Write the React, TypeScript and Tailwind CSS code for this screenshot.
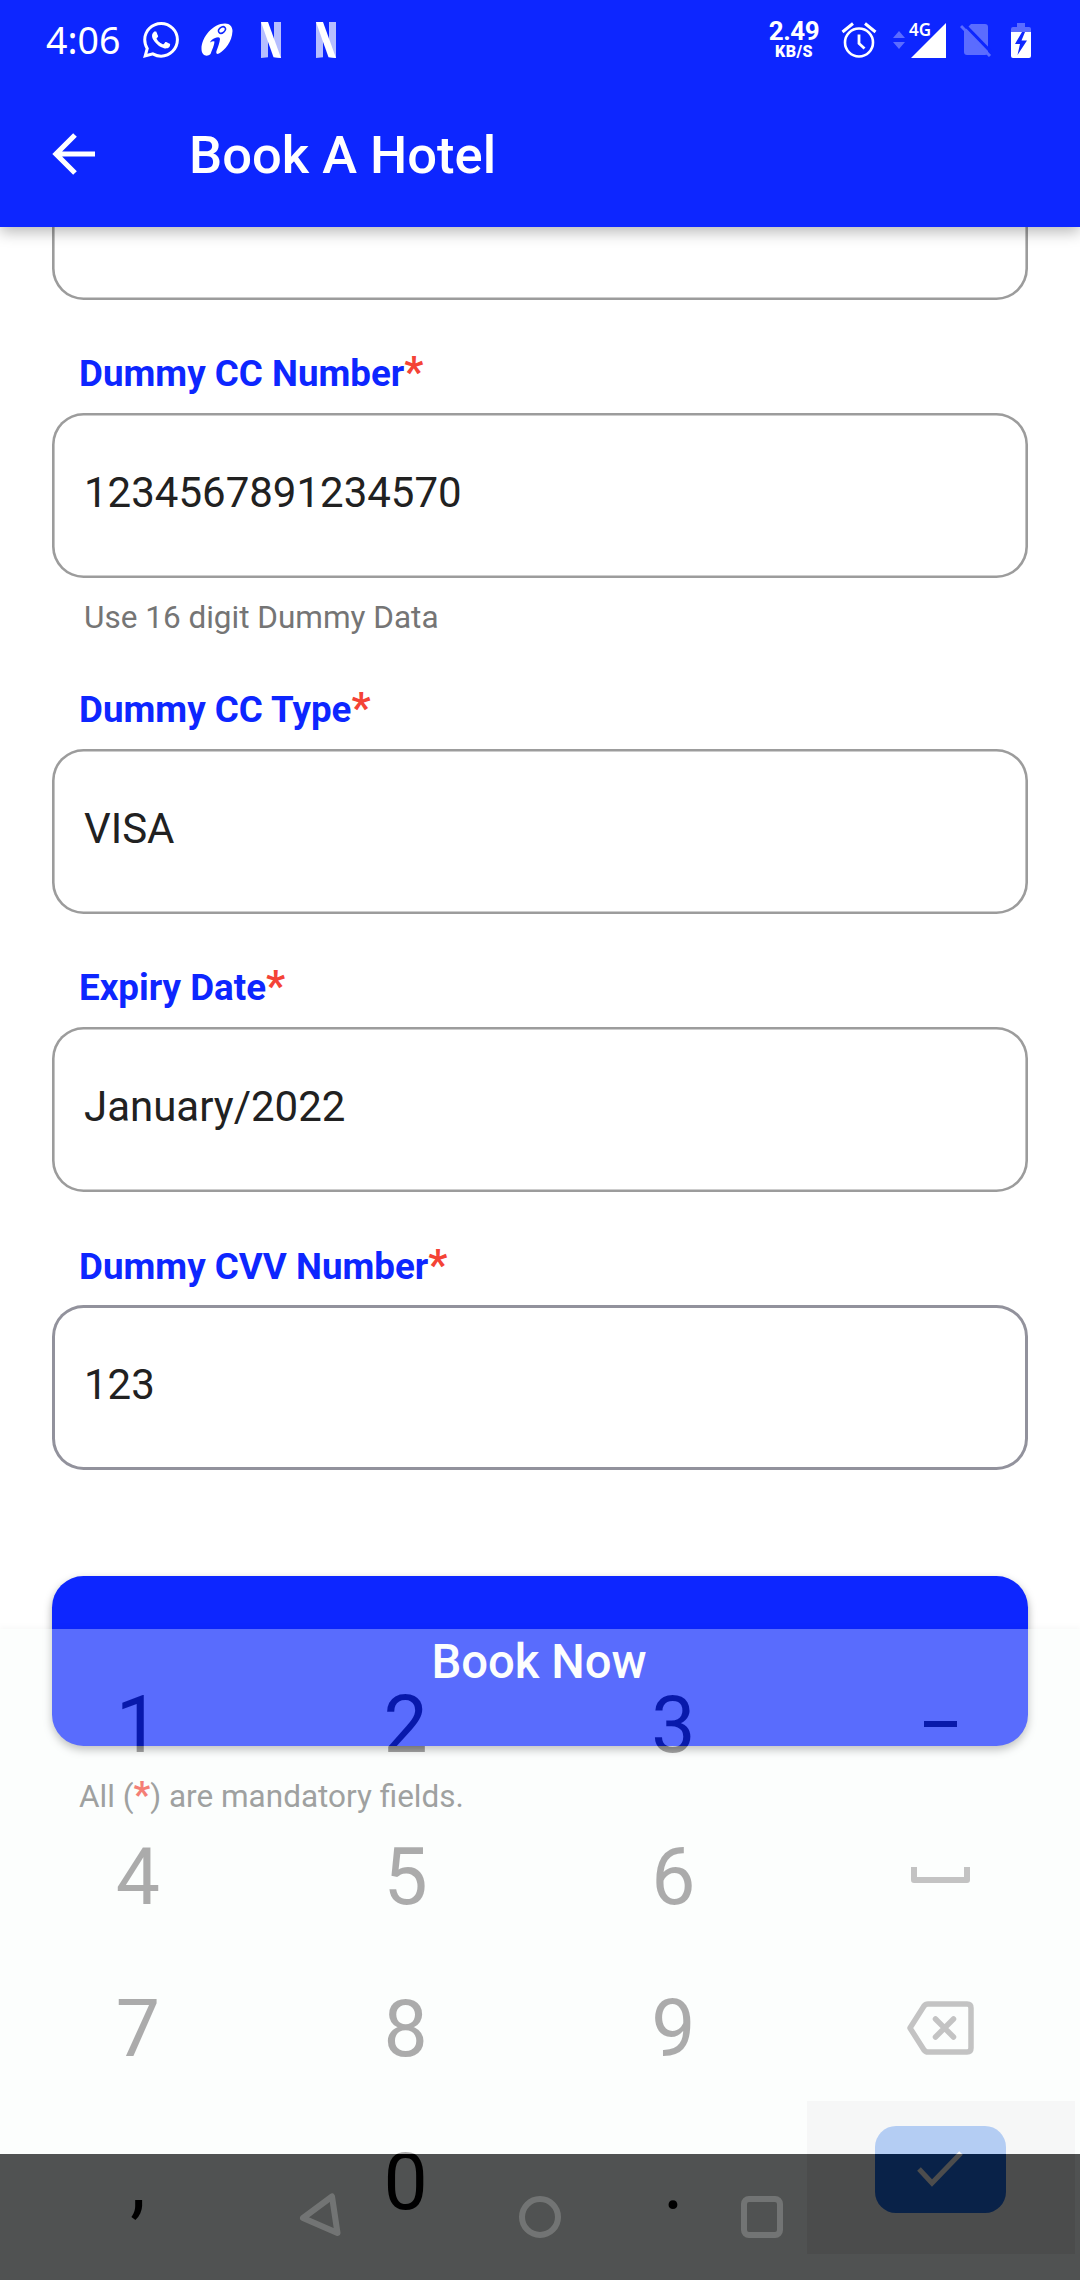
import type { ReactNode } from "react";

function Label({ children }: { children: ReactNode }) {
  return (
    <div className="h-[44px] whitespace-nowrap pl-[27px] pt-[0.5px] text-[36.75px] font-bold leading-[44px] text-[#0d26ff]">
      {children}
      <span className="text-[42px] font-bold leading-[0] text-[#f44336]">*</span>
    </div>
  );
}

function Field({ label, value, focused, helper }: { label: string; value: string; focused?: boolean; helper?: string }) {
  return (
    <section className={helper ? "h-[336px]" : "h-[278.25px]"}>
      <Label>{label}</Label>
      <div
        className={
          "mt-[17px] flex h-[165.4px] items-center rounded-[31.5px] pb-[5px] pl-[32px] text-[42px] leading-[50px] text-[#212121] " +
          (focused ? "shadow-[inset_0_0_0_3px_#92929c]" : "shadow-[inset_0_0_0_2.6px_#9c9c9c]")
        }
      >
        {value}
      </div>
      {helper && (
        <p className="mt-[21px] pl-[32px] text-[31.5px] leading-[38px] text-[#757575]">{helper}</p>
      )}
    </section>
  );
}

function StatusBar() {
  return (
    <div className="flex h-[80px] items-center text-white">
      <span className="ml-[46px] w-[97px] font-['Noto_Sans'] text-[37.5px] font-normal leading-[50px]">4:06</span>
      <svg className="h-[36px] w-[36px]" viewBox="0 0 24 24" fill="currentColor">
        <path d="M17.472 14.382c-.297-.149-1.758-.867-2.03-.967-.273-.099-.471-.148-.67.15-.197.297-.767.966-.94 1.164-.173.199-.347.223-.644.075-.297-.15-1.255-.463-2.39-1.475-.883-.788-1.48-1.761-1.653-2.059-.173-.297-.018-.458.13-.606.134-.133.298-.347.446-.52.149-.174.198-.298.298-.497.099-.198.05-.371-.025-.52-.075-.149-.669-1.612-.916-2.207-.242-.579-.487-.5-.669-.51-.173-.008-.371-.01-.57-.01-.198 0-.52.074-.792.372-.272.297-1.04 1.016-1.04 2.479 0 1.462 1.065 2.875 1.213 3.074.149.198 2.096 3.2 5.077 4.487.709.306 1.262.489 1.694.625.712.227 1.36.195 1.871.118.571-.085 1.758-.719 2.006-1.413.248-.694.248-1.289.173-1.413-.074-.124-.272-.198-.57-.347m-5.421 7.403h-.004a9.87 9.87 0 01-5.031-1.378l-.361-.214-3.741.982.998-3.648-.235-.374a9.86 9.86 0 01-1.51-5.26c.001-5.45 4.436-9.884 9.888-9.884 2.64 0 5.122 1.03 6.988 2.898a9.825 9.825 0 012.893 6.994c-.003 5.45-4.437 9.884-9.885 9.884m8.413-18.297A11.815 11.815 0 0012.05 0C5.495 0 .16 5.335.157 11.892c0 2.096.547 4.142 1.588 5.945L.057 24l6.305-1.654a11.882 11.882 0 005.683 1.448h.005c6.554 0 11.89-5.335 11.893-11.893a11.821 11.821 0 00-3.48-8.413z" />
      </svg>
      <svg className="ml-[22px] h-[34px] w-[32px]" viewBox="0 0 32 34">
        <path fill="#fff" d="M31.500 8C31 19 24 27 18 30.500Q14.500 32 15.500 28C17 24 18.500 20 19 16Q19 13.500 15.500 14.500C11.500 15.500 9.500 18 9 19.500Q12 17.500 13.500 18.500C13.500 22 11 27 9.500 31C6 34.500 .5 32.500 .5 26C.5 14 12 .5 24 .5C29 .5 31.500 4 31.500 8Z" />
        <ellipse cx="21" cy="7" rx="3.800" ry="2.700" transform="rotate(-40 21 7)" fill="#fff" stroke="#0d26ff" strokeWidth="1.500" />
      </svg>
      <NetflixMark className="ml-[28px]" />
      <NetflixMark className="ml-[35px]" />
      <div className="ml-[432px] flex w-[52px] flex-col items-center pb-px font-bold">
        <span className="text-[26px] leading-[22px] tracking-[-0.5px]">2.49</span>
        <span className="mt-[2px] text-[16px] font-black leading-[16px] tracking-[0.5px]">KB/S</span>
      </div>
      <svg className="ml-[21px] h-[36px] w-[36px]" viewBox="0 0 36 36" fill="none" stroke="#fff" strokeWidth="2.600">
        <circle cx="18" cy="20.500" r="14" />
        <path d="M1.500 10L12 1.500M34.500 10L24 1.500" strokeWidth="3" />
        <path d="M18 12.500V21.500L23.500 26.500" strokeWidth="2.800" />
      </svg>
      <svg className="ml-[16px] h-[18px] w-[12px]" viewBox="0 0 12 18" fill="#5b6cff">
        <path d="M6 0L12 7H0ZM0 11H12L6 18Z" />
      </svg>
      <div className="relative ml-[6px] h-[35px] w-[35px]">
        <svg className="h-[35px] w-[35px]" viewBox="0 0 35 35">
          <path d="M35 0V35H0Z" fill="#fff" />
          <path d="M0 0H21V12.500L17 17H0Z" fill="#0d26ff" />
        </svg>
        <span className="absolute -left-[2px] -top-[2px] font-['Noto_Sans'] text-[17px] font-semibold leading-[17px]">4G</span>
      </div>
      <svg className="ml-[14px] h-[34px] w-[32px]" viewBox="0 0 32 34">
        <path d="M11 1H25Q28 1 28 4V29Q28 32 25 32H7Q4 32 4 29V8Z" fill="#5b6cff" />
        <path d="M3 0L32 30" stroke="#0d26ff" strokeWidth="3" />
        <path d="M1 3L30 33" stroke="#5b6cff" strokeWidth="3" />
      </svg>
      <svg className="ml-[19px] h-[35px] w-[20px]" viewBox="0 0 20 35">
        <path d="M6 0H14V4H18Q20 4 20 6V9H0V6Q0 4 2 4H6Z" fill="#5b6cff" />
        <path d="M0 9H20V33Q20 35 18 35H2Q0 35 0 33Z" fill="#fff" />
        <path d="M11 9L4 21H9L6.500 32L16 17.500H10.500L14 9Z" fill="#0d26ff" />
      </svg>
    </div>
  );
}

function NetflixMark({ className }: { className: string }) {
  return (
    <svg className={className + " h-[36px] w-[20px]"} viewBox="0 0 20 36">
      <path d="M0 0H7V35.300L0 36ZM13 0H20V36L13 35Z" fill="#b6beff" />
      <path d="M0 0H7L20 36L12.500 35.300Z" fill="#fff" />
    </svg>
  );
}

function Key({ children }: { children: ReactNode }) {
  return <div className="flex items-center justify-center pr-[2px]">{children}</div>;
}

function CharKey({ children }: { children: ReactNode }) {
  return <div className="flex items-center justify-center pt-[4px] text-[78.75px] leading-[92px]">{children}</div>;
}

function Keyboard() {
  return (
    <div className="absolute inset-x-0 bottom-0 h-[651px] bg-[#f6fcfa] pl-[4px] pr-[5px] pt-[18px] text-black opacity-[0.327] shadow-[0_-2px_5px_rgba(0,0,0,0.08)]">
      <div className="grid auto-rows-[152.2px] grid-cols-4">
        <CharKey>1</CharKey>
        <CharKey>2</CharKey>
        <CharKey>3</CharKey>
        <Key>
          <div className="mt-[2px] h-[6px] w-[33px] bg-black" />
        </Key>
        <CharKey>4</CharKey>
        <CharKey>5</CharKey>
        <CharKey>6</CharKey>
        <Key>
          <svg className="h-[16px] w-[59px]" viewBox="0 0 59 16" fill="none" stroke="#4a4a4a" strokeWidth="6">
            <path d="M3 0V13H56V0" strokeLinejoin="round" />
          </svg>
        </Key>
        <CharKey>7</CharKey>
        <CharKey>8</CharKey>
        <CharKey>9</CharKey>
        <Key>
          <svg className="mt-px h-[54px] w-[67px]" viewBox="0 0 67 54" fill="none" stroke="#4a4a4a" strokeWidth="5.500" strokeLinejoin="round" strokeLinecap="round">
            <path d="M21 3H60Q64 3 64 7V47Q64 51 60 51H21Q18.500 51 17 49L3 27L17 5Q18.500 3 21 3Z" />
            <path d="M28.500 18L46.500 36M46.500 18L28.500 36" />
          </svg>
        </Key>
        <CharKey>,</CharKey>
        <CharKey>0</CharKey>
        <CharKey>.</CharKey>
        <div className="-mt-[3px] flex h-[153px] items-center justify-center bg-[#e6e9e9] pb-[16px] pr-[2px]">
          <div className="flex h-[87px] w-[131px] items-center justify-center rounded-[21px] bg-[#1d69dd]">
            <svg className="h-[36px] w-[46px]" viewBox="0 0 46 36" fill="none" stroke="#ebebeb" strokeWidth="5">
              <path d="M2 18L15 32L44 2" />
            </svg>
          </div>
        </div>
      </div>
    </div>
  );
}

export default function App() {
  return (
    <div className="relative flex h-[2280px] w-[1080px] flex-col overflow-hidden bg-white font-[Roboto,sans-serif]">
      <header className="z-10 h-[227px] shrink-0 bg-[#0d26ff] shadow-[0_5px_14px_rgba(0,0,0,0.28)]">
        <StatusBar />
        <div className="flex h-[147px] items-center">
          <svg className="ml-[52px] h-[42px] w-[43px]" viewBox="0 0 43 42" fill="none" stroke="#fff" strokeWidth="5.200">
            <path d="M43 21H4M23 2L4 21L23 40" />
          </svg>
          <h1 className="ml-[94px] pt-[2px] text-[52.5px] font-medium leading-[62px] text-white">Book A Hotel</h1>
        </div>
      </header>

      <main className="flex min-h-0 flex-1 flex-col px-[52px]">
        <div className="h-[73px] shrink-0 overflow-hidden">
          <div className="-mt-[92.400px] h-[165.400px] rounded-[31.5px] shadow-[inset_0_0_0_2.6px_#9c9c9c]" />
        </div>
        <div className="mt-[51.600px] shrink-0">
          <Field label="Dummy CC Number" value="1234567891234570" helper="Use 16 digit Dummy Data" />
          <Field label="Dummy CC Type" value="VISA" />
          <Field label="Expiry Date" value="January/2022" />
          <Field label="Dummy CVV Number" value="123" focused />
        </div>
        <button className="mt-[53.500px] h-[170.600px] shrink-0 rounded-[31.5px] bg-[#0d26ff] pr-[2px] pt-px text-[47.25px] font-medium leading-[56px] text-white shadow-[0_4px_8px_rgba(0,0,0,0.35)]">
          Book Now
        </button>
        <p className="mt-[32px] pl-[27px] text-[31.5px] leading-[38px] text-[#757575]">
          All (<span className="text-[36.75px] font-bold leading-[0] text-[#f44336]">*</span>) are mandatory fields.
        </p>
      </main>

      <nav className="h-[126px] shrink-0 bg-black pl-[298px] pt-[39px]">
        <svg className="h-[50px] w-[490px]" viewBox="298 2193 490 50" fill="none" stroke="#333" strokeWidth="6" strokeLinejoin="round">
          <path d="M303 2218L332 2196.500L337.500 2233Z" />
          <circle cx="540" cy="2217" r="18" />
          <rect x="744" y="2199" width="36" height="36" rx="5" />
        </svg>
      </nav>
      <Keyboard />
    </div>
  );
}
